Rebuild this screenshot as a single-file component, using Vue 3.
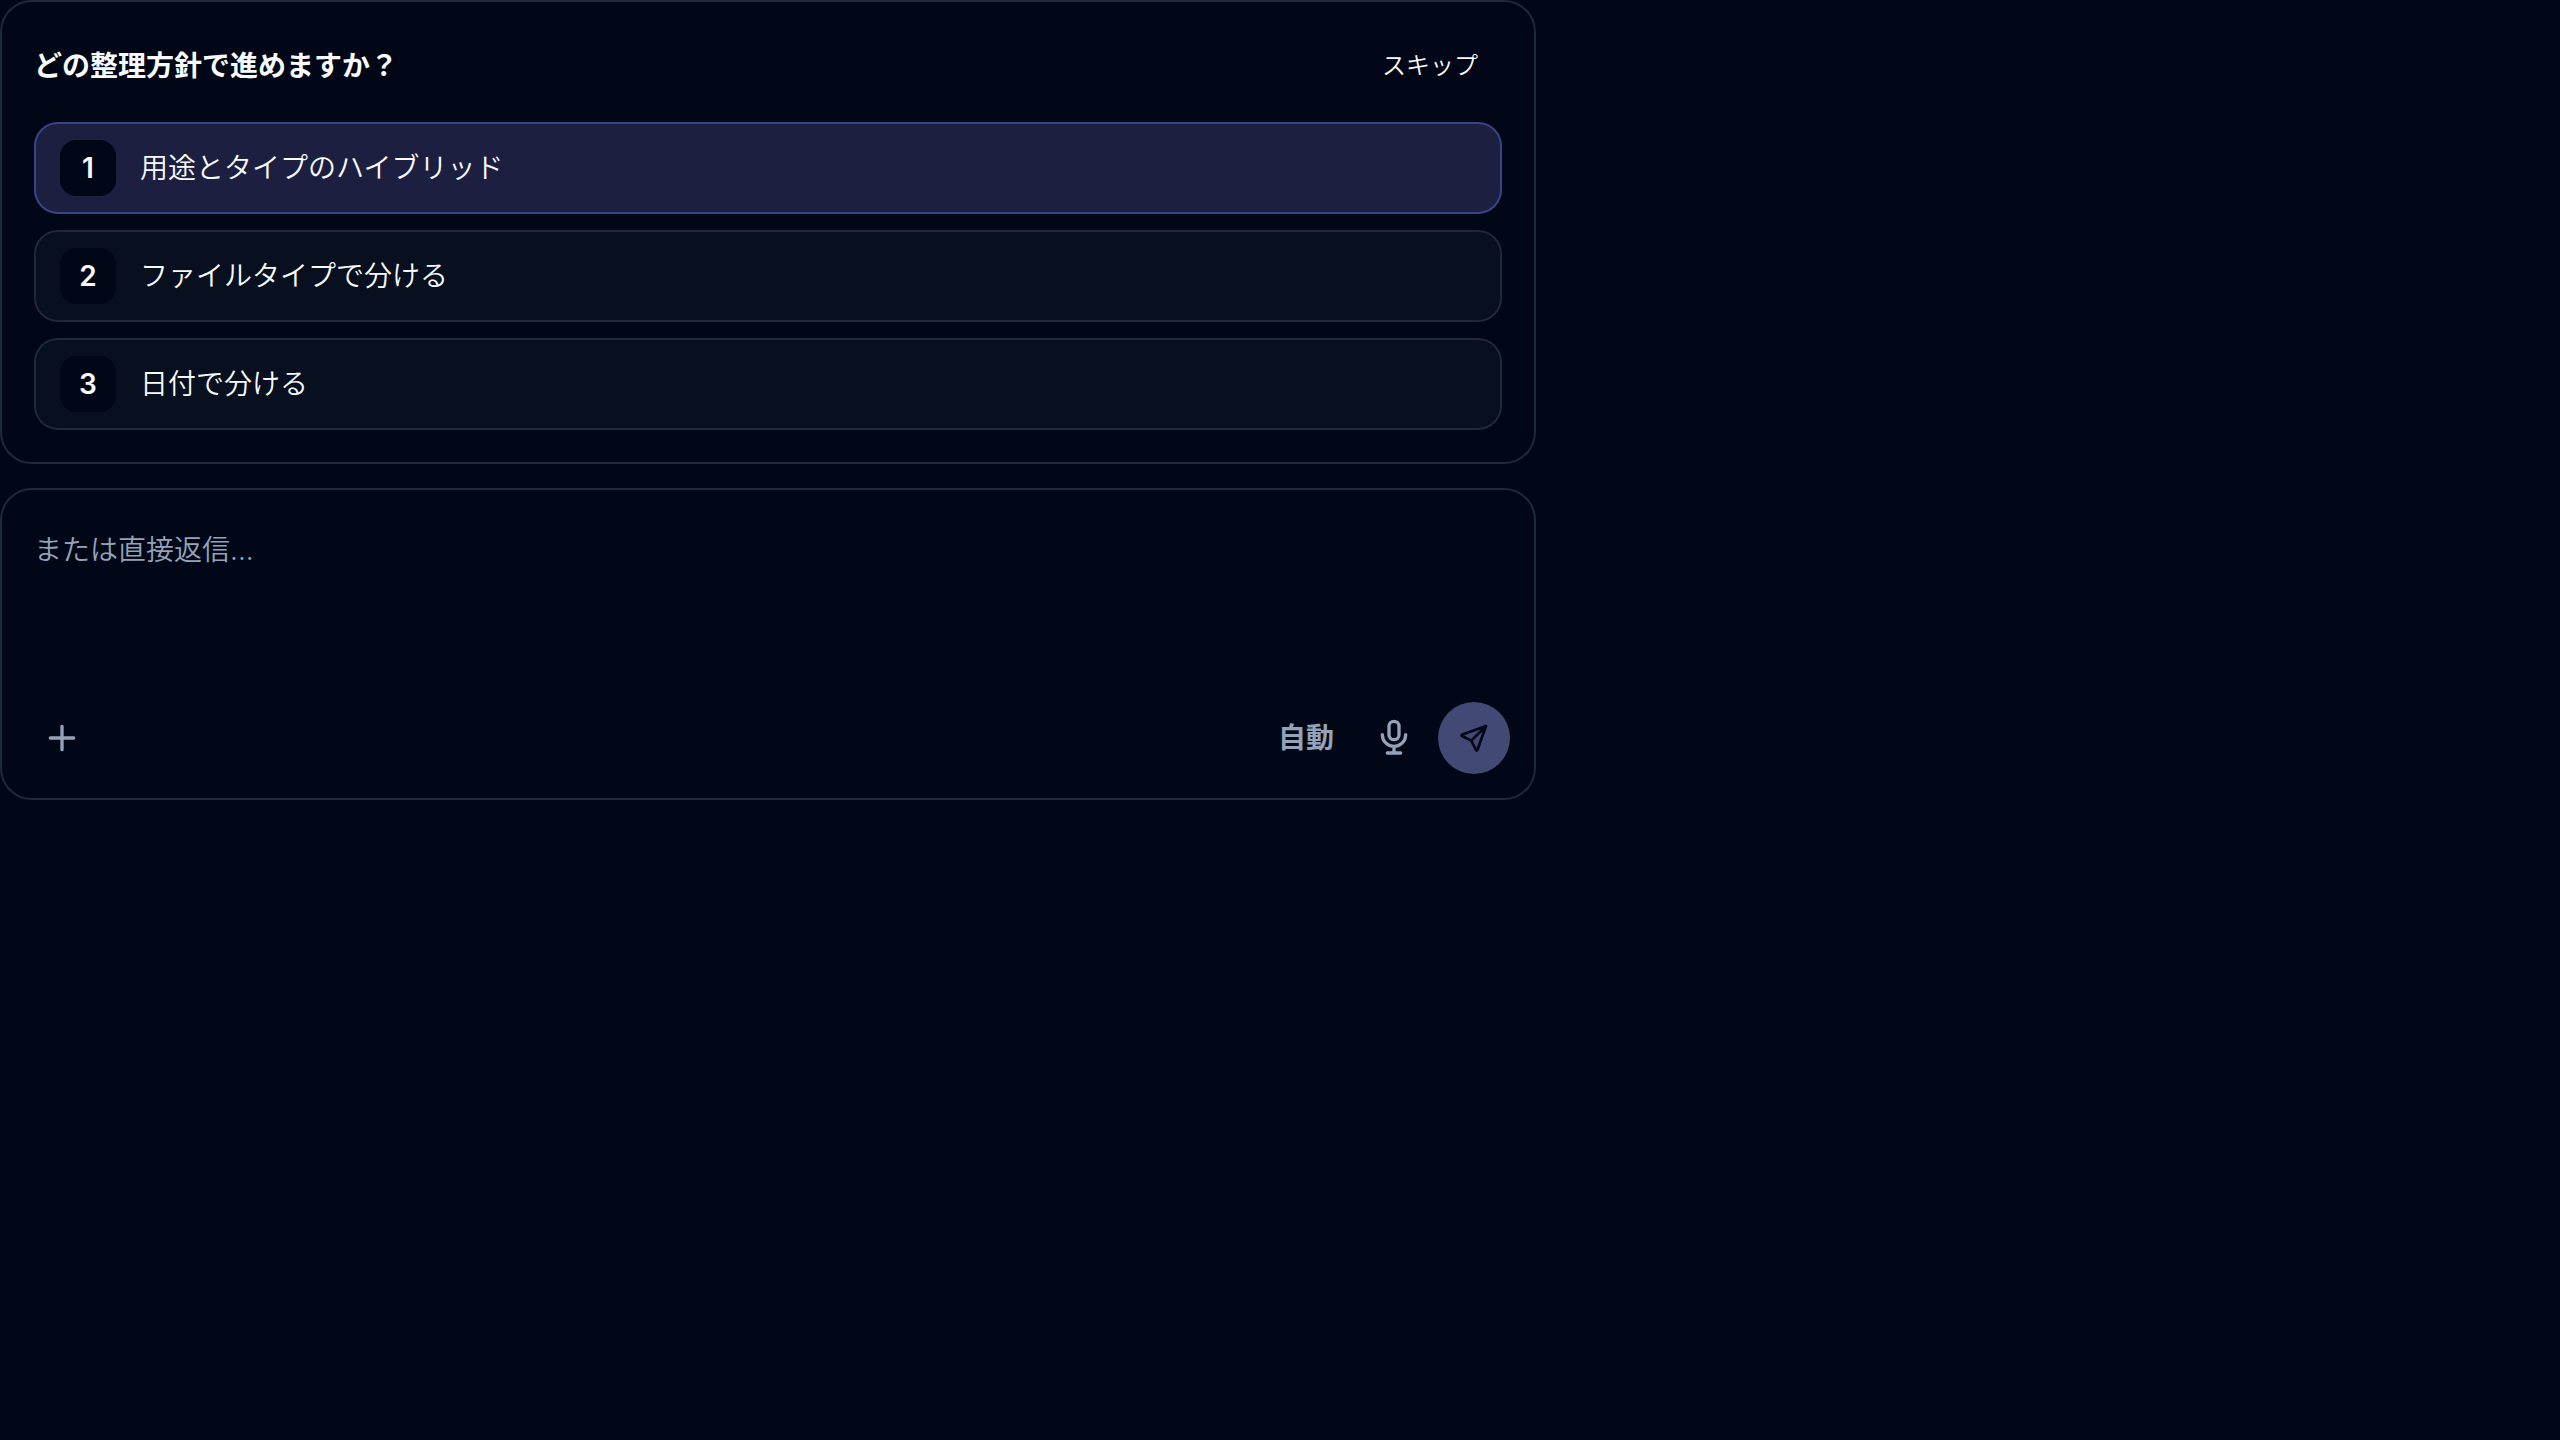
<template>
  <main class="chat">
    <section class="card question" aria-labelledby="question-title">
      <header class="question-head">
        <h2 id="question-title">{{ question }}</h2>
        <button type="button" class="skip" @click="selected = null">スキップ</button>
      </header>
      <div class="options">
        <button
          v-for="(item, index) in options"
          :key="item"
          type="button"
          class="option"
          :class="{ active: selected === index }"
          :aria-pressed="selected === index"
          @click="selected = index"
        >
          <span class="number">{{ index + 1 }}</span>
          <span>{{ item }}</span>
        </button>
      </div>
    </section>

    <form class="card composer" @submit.prevent="send">
      <textarea v-model="message" placeholder="または直接返信..." aria-label="返信"></textarea>
      <div class="toolbar">
        <button type="button" class="icon-btn" aria-label="追加">
          <svg viewBox="0 0 24 24"><path d="M5 12h14M12 5v14" /></svg>
        </button>
        <div class="actions">
          <button type="button" class="mode">自動</button>
          <button type="button" class="icon-btn" aria-label="音声入力">
            <svg viewBox="0 0 24 24">
              <rect x="9" y="2" width="6" height="11" rx="3" />
              <path d="M5 10a7 7 0 0 0 14 0M8 21h8M12 17v4" />
            </svg>
          </button>
          <button type="submit" class="icon-btn send" aria-label="送信">
            <svg viewBox="0 0 24 24">
              <path d="M10 14 21 3M21 3l-6.5 18a.55.55 0 0 1-1 0L10 14l-7-3.5a.55.55 0 0 1 0-1L21 3" />
            </svg>
          </button>
        </div>
      </div>
    </form>
  </main>
</template>

<script setup>
import { ref } from 'vue';

const question = 'どの整理方針で進めますか？'
const options = ['用途とタイプのハイブリッド', 'ファイルタイプで分ける', '日付で分ける']
const selected = ref(0)
const message = ref('')

function send() {
  message.value = ''
}
</script>

<style>
body {
  background: #010716;
}
</style>

<style scoped>
.chat {
  display: flex;
  flex-direction: column;
  gap: 24px;
  max-width: 1536px;
  color: #f8fafc;
  font-family: Inter, "Noto Sans CJK JP", sans-serif;
  font-size: 28px;
  font-weight: 350;
  line-height: 40px;
}

button,
textarea {
  padding: 0;
  border: 0;
  background: none;
  color: inherit;
  font: inherit;
}

button {
  cursor: pointer;
}

.card {
  border: 2px solid #1e293b;
  border-radius: 32px;
}

.question {
  padding: 32px;
}

.question-head {
  display: flex;
  align-items: center;
  justify-content: space-between;
  margin-bottom: 24px;
}

.question-head h2 {
  margin: 0;
  font-size: 28px;
  font-weight: 600;
}

.skip {
  height: 64px;
  padding: 0 24px;
  font-size: 24px;
}

.options {
  display: flex;
  flex-direction: column;
  gap: 16px;
}

.option {
  display: flex;
  align-items: center;
  gap: 24px;
  padding: 16px 24px;
  border: 2px solid #1e293b;
  border-radius: 24px;
  background: #080f1e;
  text-align: left;
}

.option.active {
  border-color: #38448a;
  background: #1d1f40;
}

.number {
  display: flex;
  align-items: center;
  justify-content: center;
  width: 56px;
  height: 56px;
  border-radius: 16px;
  background: #010716;
  font-weight: 600;
}

.composer {
  padding: 24px;
}

textarea {
  display: block;
  box-sizing: border-box;
  width: 100%;
  height: 176px;
  padding: 16px 8px;
  outline: none;
  resize: none;
}

textarea::placeholder {
  color: #94a3b8;
  opacity: 1;
}

.toolbar,
.actions {
  display: flex;
  align-items: center;
}

.toolbar {
  justify-content: space-between;
  margin-top: 12px;
  color: #94a3b8;
}

.actions {
  gap: 8px;
}

.mode {
  height: 72px;
  padding: 0 16px;
  font-weight: 600;
}

.icon-btn {
  display: flex;
  align-items: center;
  justify-content: center;
  width: 72px;
  height: 72px;
  border-radius: 50%;
}

.icon-btn svg {
  width: 40px;
  height: 40px;
  fill: none;
  stroke: currentColor;
  stroke-width: 2;
  stroke-linecap: round;
  stroke-linejoin: round;
}

.icon-btn.send {
  background: #414974;
  color: #010716;
}

.icon-btn.send svg {
  width: 32px;
  height: 32px;
}
</style>
